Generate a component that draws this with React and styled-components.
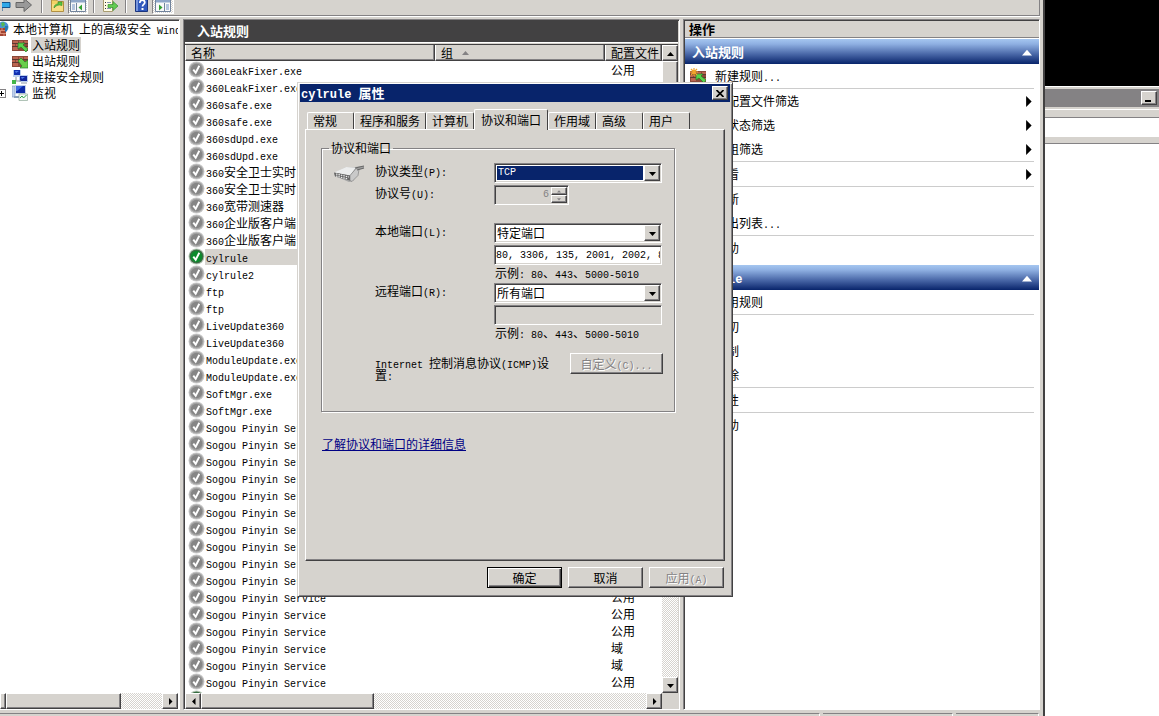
import React, { useState } from 'react'
import styled, { createGlobalStyle, css } from 'styled-components'

const face = '#d6d3ce'
const shade = '#848284'
const dark = '#424142'
const navy = '#08246b'

// // // // // // // // // // // Shared edges // // // // // // // // // // //
const raised = css`
    border: 1px solid;
    border-color: #fff ${dark} ${dark} #fff;
    box-shadow: inset -1px -1px ${shade};
    background: ${face};
`
const sunken = css`
    border: 1px solid;
    border-color: ${shade} #fff #fff ${shade};
    box-shadow: inset 1px 1px ${dark}, inset -1px -1px ${face};
    padding: 1px;
`
const checker = css`
    background: repeating-conic-gradient(#fff 0 25%, ${face} 0 50%) 0 0 / 2px 2px;
`

const GlobalStyle = createGlobalStyle`
    * { box-sizing: border-box; }
    body {
        margin: 0;
        overflow: hidden;
        background: #fff;
    }
    body, button, input, select {
        font-family: "Noto Sans CJK SC", sans-serif;
        font-size: 12px;
        line-height: 16px;
        color: #000;
    }
    button { padding: 0; }
    ul { list-style: none; margin: 0; padding: 0; }
`

// // // // // // // // // // // Text // // // // // // // // // // //
const Latin = styled.span`
    font-family: "Liberation Mono", monospace;
    font-size: ${p => (p.$bold ? 12 : 10)}px;
    line-height: 0;
    white-space: pre;
`
// Latin runs take half the width of a Chinese character
const Text = ({ value, bold }) =>
    value.split(/([\x20-\x7e]+)/).filter(Boolean).map((part, i) =>
        /^[\x20-\x7e]/.test(part) ? <Latin key={i} $bold={bold}>{part}</Latin> : part
    )

// // // // // // // // // // // Icons // // // // // // // // // // //
const Svg = styled.svg`
    flex: none;
    display: block;
`
const Triangle = ({ dir, color = '#000', size = 7 }) => {
    const d = {
        up: 'M0 6h7L3.5 2z',
        down: 'M0 2h7L3.5 6z',
        left: 'M5.5 0v7L2 3.5z',
        right: 'M2 0v7l3.5-3.5z'
    }[dir]
    return <Svg width={size} height={size} viewBox="0 0 7 7" aria-hidden="true"><path d={d} fill={color} /></Svg>
}
const CheckIcon = ({ on }) => (
    <Svg width="17" height="17" viewBox="0 0 17 17" aria-hidden="true">
        <circle cx="8.5" cy="8.5" r="8" fill={on ? '#b9c9b9' : '#c9c9c9'} />
        <circle cx="8.5" cy="8.5" r="7" fill={on ? '#3c6b44' : '#a3a3a3'} />
        <circle cx="8.5" cy="8.5" r="5.8" fill={on ? '#0c8a2c' : '#868686'} />
        <path d="M5.3 8.6l2.4 3.2 3.6-7" fill="none" stroke="#fff" strokeWidth="1.9" />
    </Svg>
)
const WallIcon = ({ arrow, star }) => (
    <Svg width="16" height="16" viewBox="0 0 16 16" aria-hidden="true">
        <path d="M0 3h16v11H0z" fill="#8c4a3a" />
        <path d="M1 4h5v2H1zM7 4h4v2H7zM12 4h4v2h-4zM0 7h3v2H0zM4 7h5v2H4zM1 10h5v3H1zM12 10h4v3h-4z" fill="#bb6651" />
        <path d="M0 6.5h16M0 9.5h16" stroke="#5e3931" strokeWidth="1" />
        {arrow === 'in'
            ? <path d="M6 6h7l-2 2 5 4-2 3-5-5-3 2z" fill="#59d24b" stroke="#267d27" strokeWidth=".7" />
            : <path d="M6 8l3-3 4 4 3-2v8H8l2-2z" fill="#69cf4b" stroke="#267d27" strokeWidth=".7" />}
        {star && <path d="M4 0v8M0 4h8M1 1l6 6M7 1L1 7" stroke="#f2a52c" strokeWidth="1.2" />}
    </Svg>
)
const LinkedIcon = () => (
    <Svg width="16" height="16" viewBox="0 0 16 16" aria-hidden="true">
        <path d="M1 1h8v7H1z" fill="#bcd0ee" /><path d="M2 1h6v5H2z" fill="#1230b0" />
        <path d="M7 6h9v7H7z" fill="#bcd0ee" /><path d="M8 7h7v5H8z" fill="#10249a" />
        <path d="M4 8v4h5" fill="none" stroke="#86949a" />
        <path d="M0 11h4v4H0z" fill="#43b649" /><path d="M9 14h6" stroke="#8898a8" />
        <path d="M3 2h4L4 4zM9 8h4l-3 2z" fill="#4f7bea" />
    </Svg>
)
const MonitorIcon = () => (
    <Svg width="16" height="16" viewBox="0 0 16 16" aria-hidden="true">
        <path d="M0 1h3v11H0z" fill="#bfd2ee" stroke="#7f91b8" strokeWidth=".6" />
        <path d="M3 0h11v9H3z" fill="#c3d2ea" /><path d="M4 1h9v7H4z" fill="#0d2aa8" /><path d="M4 1h7L5 6H4z" fill="#3e69de" />
        <path d="M2 11h6v2H2z" fill="#8aa0ba" />
        <path d="M7 9h8.5v6.5H7z" fill="#f4faf6" stroke="#8fa99a" strokeWidth=".7" />
        <path d="M8 13l2-2 1.5 2 3-3" fill="none" stroke="#2da34c" />
    </Svg>
)
const GlobeIcon = () => (
    <Svg width="9" height="16" viewBox="7 0 9 16" aria-hidden="true">
        <circle cx="10" cy="6" r="5.5" fill="#4a92d6" />
        <path d="M8 2l3-1 1 3-3 2zM11 6l4-1-1 4-3 1z" fill="#55b94f" />
        <path d="M4 7h9v8H4z" fill="#a24432" /><path d="M4 9.5h9M4 12.5h9M9 7v2.5M7.5 10v2.5M11 12.5V15" stroke="#e59a83" strokeWidth=".8" />
        <path d="M12 5h3l-1 5-2 1z" fill="#2675bb" />
    </Svg>
)
const BackIcon = () => (
    <Svg width="9" height="15" viewBox="0 0 9 15" aria-hidden="true">
        <path d="M-1 2.500h9v5H0V11l-4-6" fill="#31a9e8" stroke="#17558c" />
    </Svg>
)
const ForwardIcon = () => (
    <Svg width="18" height="15" viewBox="0 0 18 15" aria-hidden="true">
        <path d="M1 2.500h8v-4l7.500 6.500L9 11.500v-4H1z" fill="#999" stroke="#666" />
    </Svg>
)
const FolderIcon = () => (
    <Svg width="16" height="15" viewBox="0 0 16 15" aria-hidden="true">
        <path d="M1.500 0v11.500h12V1.500H8L6.500 0z" fill="#f3d264" stroke="#b29042" />
        <path d="M2 4h11v7H2z" fill="#f8dd82" />
        <path d="M4 8c0-3 2-4 4-4V2l4 0v3.500L9.500 5C7 5 6 6 4 8z" fill="#5bc63f" stroke="#338a28" strokeWidth=".6" />
    </Svg>
)
const PaneIcon = ({ dir }) => (
    <Svg width="16" height="14" viewBox="0 0 16 14" aria-hidden="true">
        <path d="M.5-3.500h15v15H.5z" fill="#f8f8f8" stroke="#71839c" />
        <path d="M1 0h14v2.500H1z" fill="#8fa6c8" />
        <path d={dir === 'left' ? 'M6.500 3v8' : 'M9.500 3v8'} stroke="#71839c" />
        <path d={dir === 'left' ? 'M2 5h3M2 7h3M2 9h3' : 'M11 5h3M11 7h3M11 9h3'} stroke="#7090c4" />
        <path d={dir === 'left' ? 'M12 4.500v6L8.500 7.500z' : 'M4 4.500v6l3.500-3z'} fill="#35a135" />
    </Svg>
)
const ExportIcon = () => (
    <Svg width="17" height="15" viewBox="0 0 17 15" aria-hidden="true">
        <path d="M1.500-2h9v13.500h-9z" fill="#fffce6" stroke="#a99c70" />
        <path d="M3 2.500h1M3 5.500h1M3 8.500h1" stroke="#333" /><path d="M5 2.500h4M5 8.500h4" stroke="#8597b5" />
        <path d="M6 4.500h5v-3l5 4.500-5 4.500v-3H6z" fill="#63cc52" stroke="#368f31" strokeWidth=".7" />
    </Svg>
)
const HelpIcon = () => (
    <Svg width="14" height="15" viewBox="0 0 14 15" aria-hidden="true">
        <path d="M.5-1h12v12.500H.5z" fill="#3159bd" stroke="#1b357e" />
        <path d="M1 0h2v11H1z" fill="#7896dc" />
        <path d="M4.800 3c0-4 5-3.500 5-.5 0 2-2.300 1.800-2.300 4" fill="none" stroke="#fff" strokeWidth="1.700" /><path d="M6.500 8h2v2h-2z" fill="#fff" />
    </Svg>
)
const PortIcon = () => (
    <Svg width="34" height="18" viewBox="0 0 34 18" aria-hidden="true">
        <path d="M1 8L13 2l9 0 9-1v2l-6 2-1 5-4 6-4 1L2 11z" fill="#a5a5a5" />
        <path d="M1 7.500L13 2l10 .5-6 8z" fill="#eceded" />
        <path d="M1 7.500l16 3v5L2 11.500z" fill="#666" />
        <path d="M3 9l13 3M3 11l12 3" stroke="#f2f2f2" strokeWidth="1.200" strokeDasharray="1.500 1" />
        <path d="M17 10.500l6-7 3 1-1 6-6 6-2-1z" fill="#c9c9c9" stroke="#777" strokeWidth=".6" />
        <path d="M22 3l9-2M24 5l7-2" stroke="#696969" strokeWidth="1.200" />
    </Svg>
)
const CloseIcon = () => (
    <Svg width="8" height="7" viewBox="0 0 8 7" aria-hidden="true"><path d="M.5 0l7 7M7.500 0l-7 7" stroke="#000" strokeWidth="1.700" /></Svg>
)

// // // // // // // // // // // Layout // // // // // // // // // // //
const Desktop = styled.div`
    display: flex;
    height: 100vh;
    overflow: hidden;
    position: relative;
    background: #000;
`
const Console = styled.div`
    flex: 1;
    min-width: 0;
    display: flex;
    flex-direction: column;
    background: ${face};
    border-right: 2px solid ${dark};
`
const Toolbar = styled.div`
    display: flex;
    height: 16px;
    flex: none;
    overflow: hidden;
    margin-right: 3px;
    border-bottom: 1px solid ${shade};
    border-right: 1px solid ${shade};
    box-shadow: 0 1px #fff;
`
const ToolButton = styled.button`
    display: flex;
    justify-content: center;
    flex: none;
    width: ${p => p.$width || 24}px;
    height: 14px;
    border: 0;
    background: none;
    ${p => p.$pressed && css`
        ${checker}
        border-right: 1px solid #fff;
        border-bottom: 1px solid #fff;
        border-left: 1px solid ${shade};
    `}
`
const ToolSplit = styled.span`
    flex: none;
    width: 2px;
    height: 13px;
    margin: 0 5px;
    border-left: 1px solid ${shade};
    border-right: 1px solid #fff;
`
const Panes = styled.div`
    flex: 1;
    min-height: 0;
    display: flex;
    gap: 3px;
    padding: 3px 3px 0 0;
`
const Pane = styled.section`
    display: flex;
    flex-direction: column;
    min-width: 0;
    background: ${p => p.$back || '#fff'};
    border: solid;
    border-width: 1px 1px 1px ${p => (p.$first ? 0 : 1)}px;
    border-color: ${shade} #fff #fff ${shade};
    box-shadow: inset ${p => (p.$first ? 0 : 1)}px 1px ${dark};
    padding: 1px ${p => (p.$flush ? 0 : 1)}px 0 ${p => (p.$first ? 0 : 1)}px;
    flex: ${p => p.$flex || 'none'};
    width: ${p => p.$width || 'auto'};
`
const StatusBar = styled.div`
    display: flex;
    flex: none;
    gap: 3px;
    height: 6px;
    padding: 3px 4px 0 0;
`
const StatusCell = styled.span`
    flex: ${p => p.$flex || 'none'};
    width: ${p => p.$width || 'auto'};
    border-top: 1px solid ${shade};
    border-right: 1px solid #fff;
`

// // // // // // // // // // // Tree // // // // // // // // // // //
const Tree = styled.ul`
    flex: 1;
    overflow: hidden;
`
const TreeRow = styled.li`
    display: flex;
    align-items: center;
    height: 16px;
    white-space: nowrap;
    gap: ${p => (p.$root ? 4 : 3)}px;
    padding-left: ${p => (p.$root || p.$expander ? 0 : 12)}px;
`
const TreeLabel = styled.span`
    padding: 0 1px;
    background: ${p => (p.$active ? face : 'transparent')};
`
const Expander = styled.button`
    width: 6px;
    height: 9px;
    margin-right: 3px;
    border: 1px solid ${shade};
    border-left: 0;
    background: linear-gradient(#000, #000) 0 3px / 4px 1px no-repeat, linear-gradient(#000, #000) 1px 1px / 1px 5px no-repeat, #fff;
`

// // // // // // // // // // // Scroll bars // // // // // // // // // // //
const Scroll = styled.div`
    display: flex;
    flex: none;
    flex-direction: ${p => (p.$vertical ? 'column' : 'row')};
    ${p => (p.$vertical ? 'width' : 'height')}: 16px;
    ${checker}
`
const ScrollButton = styled.button`
    ${raised}
    display: flex;
    align-items: center;
    justify-content: center;
    flex: none;
    width: ${p => p.$width || 16}px;
    height: 16px;
`
const Thumb = styled.span`
    ${raised}
    flex: none;
    flex-basis: ${p => p.$size};
`
const Grow = styled.span`
    flex: 1;
`
const Corner = styled.span`
    width: 16px;
    background: ${face};
`

// // // // // // // // // // // Rule list // // // // // // // // // // //
const ListTitle = styled.h2`
    margin: 0 0 1px;
    flex: none;
    height: 22px;
    padding: 0 12px;
    background: ${dark};
    color: #fff;
    font-size: 13px;
    line-height: 20px;
    border-bottom: 1px solid #fff;
`
const ListBox = styled.div`
    flex: 1;
    min-height: 0;
    display: flex;
    flex-direction: column;
    background: #fff;
    border-top: 1px solid ${dark};
`
const ListMain = styled.div`
    flex: 1;
    min-height: 0;
    display: flex;
`
const TableWrap = styled.div`
    flex: 1;
    overflow: hidden;
`
const Table = styled.table`
    width: 100%;
    table-layout: fixed;
    border-collapse: separate;
    border-spacing: 0;
`
const Th = styled.th`
    ${raised}
    border-top: 0;
    width: ${p => p.$width || 'auto'};
    height: 16px;
    padding: 0 5px;
    font-weight: normal;
    text-align: left;
    white-space: nowrap;
    overflow: hidden;
`
const HeadInner = styled.span`
    display: flex;
    align-items: center;
    gap: 9px;
    line-height: 15px;
`
const Td = styled.td`
    height: 17px;
    padding: 0 0 0 ${p => p.$pad || 0}px;
    line-height: 16px;
    white-space: nowrap;
    overflow: hidden;
`
const RuleName = styled.span`
    display: flex;
    align-items: center;
    height: 17px;
`
const RuleLabel = styled.span`
    flex: 1;
    padding-left: 1px;
    background: ${p => (p.$active ? face : 'transparent')};
`

// // // // // // // // // // // Actions // // // // // // // // // // //
const ActionsTitle = styled.h2`
    margin: 0 0 1px;
    padding: 0 4px;
    height: 17px;
    font-size: 13px;
    line-height: 16px;
    background: ${face};
    border-bottom: 1px solid ${shade};
`
const GroupHead = styled.button`
    display: flex;
    align-items: center;
    justify-content: space-between;
    width: 100%;
    height: 25px;
    padding: 0 7px;
    border: 0;
    background: linear-gradient(#a5c6f0, #8fb0e2 20%, #4a68a8 60%, ${navy});
    color: #fff;
    font-size: 13px;
    font-weight: bold;
`
const ActionList = styled.ul`
    padding: 0 5px;
    margin-bottom: 5px;
`
const ActionItem = styled.li`
    border-bottom: ${p => (p.$line ? '1px solid #ccc' : '0')};
`
const ActionButton = styled.button`
    display: flex;
    align-items: center;
    width: 100%;
    height: 24px;
    border: 0;
    background: none;
    text-align: left;
`
const ActionIcon = styled.span`
    width: 25px;
`
const ActionText = styled.span`
    flex: 1;
`

// // // // // // // // // // // Window behind // // // // // // // // // // //
const Behind = styled.div`
    flex: none;
    width: 114px;
    padding-top: 86px;
    display: flex;
    flex-direction: column;
`
const BehindTitle = styled.div`
    display: flex;
    align-items: center;
    justify-content: flex-end;
    height: 24px;
    padding-right: 2px;
    background: ${shade};
    border-top: 1px solid #fff;
    border-bottom: 1px solid #fff;
    box-shadow: inset 0 2px ${face}, inset 0 -2px ${face};
`
const MinButton = styled.button`
    ${raised}
    width: 16px;
    height: 14px;
    display: flex;
    align-items: flex-end;
    padding: 0 0 2px 3px;
`
const MinBar = styled.span`
    width: 6px;
    height: 2px;
    background: #000;
`
const BehindBar = styled.div`
    height: ${p => p.$height}px;
    background: ${p => (p.$white ? '#fff' : face)};
    border-bottom: 1px solid ${p => (p.$white ? '#fff' : shade)};
`
const BehindBody = styled.div`
    flex: 1;
    background: #fff;
`

// // // // // // // // // // // Dialog // // // // // // // // // // //
const Dialog = styled.div`
    position: absolute;
    left: 297px;
    top: 82px;
    width: 436px;
    padding: 1px 2px 8px;
    background: ${face};
    border: 1px solid;
    border-color: ${face} ${dark} ${dark} ${face};
    box-shadow: inset 1px 1px #fff, inset -1px -1px ${shade};
`
const TitleBar = styled.div`
    display: flex;
    align-items: center;
    justify-content: space-between;
    height: 18px;
    padding: 0 2px 0 1px;
    background: ${navy};
    color: #fff;
    font-size: 13px;
    font-weight: bold;
`
const CloseButton = styled.button`
    ${raised}
    display: flex;
    align-items: center;
    justify-content: center;
    width: 16px;
    height: 14px;
`
const TabRow = styled.div`
    display: flex;
    align-items: flex-end;
    height: 21px;
    margin: 6px 6px 0 7px;
`
const Tab = styled.button`
    min-width: 47px;
    height: ${p => (p.$active ? 21 : 17)}px;
    padding: 0 ${p => (p.$active ? 6 : 5)}px;
    margin-bottom: ${p => (p.$active ? -1 : 0)}px;
    border: 1px solid;
    border-color: #fff ${dark} ${face} #fff;
    border-bottom: 0;
    border-radius: 2px 2px 0 0;
    background: ${face};
    text-align: left;
    z-index: ${p => (p.$active ? 1 : 0)};
`
const TabPanel = styled.div`
    min-height: 432px;
    margin: 0 5px;
    padding: 11px 49px 0 15px;
    border: 1px solid;
    border-color: #fff ${dark} ${dark} #fff;
    box-shadow: inset -1px -1px ${shade};
`
const Group = styled.fieldset`
    min-width: 0;
    height: 271px;
    margin: 0 0 24px;
    padding: 8px 11px 0;
    border: 1px solid ${shade};
    box-shadow: 1px 1px #fff, inset 1px 1px #fff;
    legend {
        padding: 0 2px;
        margin-left: -4px;
        line-height: 14px;
    }
`
const Form = styled.div`
    display: grid;
    grid-template-columns: 42px 119px 168px;
    row-gap: 2px;
    align-items: start;
`
const IconCell = styled.span`
    grid-row: 1 / 3;
    padding-top: 2px;
`
const FieldLabel = styled.label`
    grid-column: 2;
`
const Field = styled.div`
    grid-column: 3;
    margin-bottom: ${p => p.$after || 0}px;
`
const Hint = styled.div`
    padding-left: 1px;
`
const SelectBox = styled.div`
    ${sunken}
    display: flex;
    height: 20px;
    background: #fff;
`
const Select = styled.select`
    flex: 1;
    min-width: 0;
    appearance: none;
    border: ${p => (p.$active ? '1px solid #fff' : '0')};
    outline: 0;
    border-radius: 0;
    padding: 0 1px;
    line-height: 14px;
    color: ${p => (p.$active ? '#fff' : '#000')};
    background: ${p => (p.$active ? navy : '#fff')};
    ${p => p.$active && css`
        font-family: "Liberation Mono", monospace;
        font-size: 10px;
    `}
`
const DropArrow = styled.span`
    ${raised}
    display: flex;
    align-items: center;
    justify-content: center;
    width: 16px;
    pointer-events: none;
`
const Input = styled.input`
    ${sunken}
    display: block;
    width: 100%;
    height: 20px;
    padding: 0 1px;
    border-radius: 0;
    outline: 0;
    background: ${p => (p.disabled ? face : '#fff')};
    color: ${p => (p.disabled ? shade : '#000')};
    font-family: "Liberation Mono", monospace;
    font-size: 10px;
`
const SpinBox = styled.div`
    ${sunken}
    display: flex;
    width: 75px;
    height: 20px;
    input {
        flex: 1;
        min-width: 0;
        border: 0;
        padding: 0 2px;
        background: none;
        text-align: right;
        color: ${shade};
        font-family: "Liberation Mono", monospace;
        font-size: 10px;
    }
`
const SpinButtons = styled.span`
    display: flex;
    flex-direction: column;
    width: 16px;
    button {
        ${raised}
        flex: 1;
        min-height: 0;
        display: flex;
        align-items: center;
        justify-content: center;
    }
`
const IcmpRow = styled.div`
    display: flex;
    justify-content: space-between;
    margin: 12px 0 0 42px;
`
const IcmpLabel = styled.span`
    width: 180px;
    padding-top: 4px;
    line-height: 12px;
`
const Button = styled.button`
    ${raised}
    width: ${p => p.$width || 75}px;
    height: 21px;
    line-height: 17px;
    ${p => p.$main && css`
        border-color: #000;
        box-shadow: inset 1px 1px #fff, inset -1px -1px ${dark}, inset -2px -2px ${shade};
    `}
    ${p => p.disabled && css`
        color: ${shade};
        text-shadow: 1px 1px #fff;
    `}
`
const HelpLink = styled.a`
    margin-left: 1px;
    color: #000084;
    text-decoration: underline;
`
const DialogButtons = styled.div`
    display: flex;
    justify-content: flex-end;
    gap: 6px;
    padding: 6px 6px 0;
`

// // // // // // // // // // // Data // // // // // // // // // // //
const names = [
    '360LeakFixer.exe', '360LeakFixer.exe', '360safe.exe', '360safe.exe', '360sdUpd.exe', '360sdUpd.exe',
    '360安全卫士实时', '360安全卫士实时', '360宽带测速器', '360企业版客户端', '360企业版客户端',
    'cylrule', 'cylrule2', 'ftp', 'ftp', 'LiveUpdate360', 'LiveUpdate360',
    'ModuleUpdate.exe', 'ModuleUpdate.exe', 'SoftMgr.exe', 'SoftMgr.exe',
    ...Array(17).fill('Sogou Pinyin Service')
]
const rules = names.map((name, i) => ({
    name,
    profile: i === 34 || i === 35 ? '域' : '公用',
    enabled: name === 'cylrule' || i === names.length - 1
}))

const listActions = [
    { text: '新建规则...', icon: true, line: true },
    { text: '按配置文件筛选', more: true },
    { text: '按状态筛选', more: true },
    { text: '按组筛选', more: true, line: true },
    { text: '查看', more: true, line: true },
    { text: '刷新' },
    { text: '导出列表...', line: true },
    { text: '帮助' }
]
const ruleActions = [
    { text: '禁用规则', line: true },
    { text: '剪切' },
    { text: '复制' },
    { text: '删除', line: true },
    { text: '属性', line: true },
    { text: '帮助' }
]
const tabs = ['常规', '程序和服务', '计算机', '协议和端口', '作用域', '高级', '用户']

// // // // // // // // // // // Parts // // // // // // // // // // //
const Actions = ({ title, items }) => (
    <>
        <GroupHead type="button">
            <span><Text value={title} bold /></span>
            <Triangle dir="up" color="#fff" size={10} />
        </GroupHead>
        <ActionList>
            {items.map(item => (
                <ActionItem key={item.text} $line={item.line}>
                    <ActionButton type="button">
                        <ActionIcon>{item.icon && <WallIcon arrow="in" star />}</ActionIcon>
                        <ActionText><Text value={item.text} /></ActionText>
                        {item.more && <Triangle dir="right" size={11} />}
                    </ActionButton>
                </ActionItem>
            ))}
        </ActionList>
    </>
)

const DropDown = ({ id, value, active }) => (
    <SelectBox>
        <Select id={id} defaultValue={value} $active={active}>
            <option>{value}</option>
        </Select>
        <DropArrow><Triangle dir="down" /></DropArrow>
    </SelectBox>
)

const RuleDialog = () => {
    const [tab, setTab] = useState('协议和端口')
    const [ports, setPorts] = useState('80, 3306, 135, 2001, 2002, 8080')

    return (
        <Dialog role="dialog" aria-labelledby="dialogTitle">
            <TitleBar>
                <span id="dialogTitle"><Text value="cylrule 属性" bold /></span>
                <CloseButton type="button" aria-label="关闭"><CloseIcon /></CloseButton>
            </TitleBar>
            <TabRow role="tablist">
                {tabs.map(name => (
                    <Tab
                        key={name}
                        type="button"
                        role="tab"
                        aria-selected={tab === name}
                        $active={tab === name}
                        onClick={() => setTab(name)}
                    >
                        {name}
                    </Tab>
                ))}
            </TabRow>
            <TabPanel role="tabpanel">
                <Group>
                    <legend>协议和端口</legend>
                    <Form>
                        <IconCell><PortIcon /></IconCell>
                        <FieldLabel htmlFor="protocol"><Text value="协议类型(P):" /></FieldLabel>
                        <Field><DropDown id="protocol" value="TCP" active /></Field>
                        <FieldLabel htmlFor="protocolNumber"><Text value="协议号(U):" /></FieldLabel>
                        <Field $after={16}>
                            <SpinBox>
                                <input id="protocolNumber" defaultValue="6" disabled />
                                <SpinButtons>
                                    <button type="button" disabled aria-label="增加"><Triangle dir="up" color={shade} size={4} /></button>
                                    <button type="button" disabled aria-label="减少"><Triangle dir="down" color={shade} size={4} /></button>
                                </SpinButtons>
                            </SpinBox>
                        </Field>
                        <FieldLabel htmlFor="localPort"><Text value="本地端口(L):" /></FieldLabel>
                        <Field><DropDown id="localPort" value="特定端口" /></Field>
                        <Field>
                            <Input aria-label="本地端口" value={ports} onChange={e => setPorts(e.target.value)} />
                            <Hint><Text value="示例: 80、443、5000-5010" /></Hint>
                        </Field>
                        <FieldLabel htmlFor="remotePort"><Text value="远程端口(R):" /></FieldLabel>
                        <Field><DropDown id="remotePort" value="所有端口" /></Field>
                        <Field>
                            <Input aria-label="远程端口" disabled />
                            <Hint><Text value="示例: 80、443、5000-5010" /></Hint>
                        </Field>
                    </Form>
                    <IcmpRow>
                        <IcmpLabel><Text value="Internet 控制消息协议(ICMP)设置:" /></IcmpLabel>
                        <Button type="button" disabled $width={93}><Text value="自定义(C)..." /></Button>
                    </IcmpRow>
                </Group>
                <HelpLink href="#ports">了解协议和端口的详细信息</HelpLink>
            </TabPanel>
            <DialogButtons>
                <Button type="button" $main>确定</Button>
                <Button type="button">取消</Button>
                <Button type="button" disabled><Text value="应用(A)" /></Button>
            </DialogButtons>
        </Dialog>
    )
}

const App = () => (
    <Desktop>
        <GlobalStyle />
        <Console>
            <Toolbar>
                <ToolButton $width={12} aria-label="后退"><BackIcon /></ToolButton>
                <ToolButton aria-label="前进"><ForwardIcon /></ToolButton>
                <ToolSplit />
                <ToolButton $width={20} aria-label="打开"><FolderIcon /></ToolButton>
                <ToolButton $width={20} $pressed aria-label="显示树"><PaneIcon dir="left" /></ToolButton>
                <ToolSplit />
                <ToolButton $width={20} aria-label="导出"><ExportIcon /></ToolButton>
                <ToolSplit />
                <ToolButton $width={20} aria-label="帮助"><HelpIcon /></ToolButton>
                <ToolButton $width={22} $pressed aria-label="显示操作"><PaneIcon dir="right" /></ToolButton>
            </Toolbar>
            <Panes>
                <Pane $first $width="180px">
                    <Tree role="tree">
                        <TreeRow role="treeitem" $root>
                            <GlobeIcon />
                            <span><Text value="本地计算机 上的高级安全 Windows" /></span>
                        </TreeRow>
                        <TreeRow role="treeitem"><WallIcon arrow="in" /><TreeLabel $active>入站规则</TreeLabel></TreeRow>
                        <TreeRow role="treeitem"><WallIcon arrow="out" /><TreeLabel>出站规则</TreeLabel></TreeRow>
                        <TreeRow role="treeitem"><LinkedIcon /><TreeLabel>连接安全规则</TreeLabel></TreeRow>
                        <TreeRow role="treeitem" $expander>
                            <Expander type="button" aria-label="展开" />
                            <MonitorIcon />
                            <TreeLabel>监视</TreeLabel>
                        </TreeRow>
                    </Tree>
                    <Scroll>
                        <ScrollButton type="button" $width={6} aria-label="向左" />
                        <Thumb $size="115px" />
                        <Grow />
                        <ScrollButton type="button" aria-label="向右"><Triangle dir="right" /></ScrollButton>
                    </Scroll>
                </Pane>
                <Pane $flex="1" $back={face}>
                    <ListTitle>入站规则</ListTitle>
                    <ListBox>
                        <ListMain>
                            <TableWrap>
                                <Table>
                                    <thead>
                                        <tr>
                                            <Th $width="250px"><HeadInner>名称</HeadInner></Th>
                                            <Th><HeadInner>组<Triangle dir="up" color={shade} /></HeadInner></Th>
                                            <Th $width="57px"><HeadInner>配置文件</HeadInner></Th>
                                        </tr>
                                    </thead>
                                    <tbody>
                                        {rules.map((rule, i) => (
                                            <tr key={i}>
                                                <Td $pad={3}>
                                                    <RuleName>
                                                        <CheckIcon on={rule.enabled} />
                                                        <RuleLabel $active={rule.name === 'cylrule'}><Text value={rule.name} /></RuleLabel>
                                                    </RuleName>
                                                </Td>
                                                <Td />
                                                <Td $pad={6}>{rule.profile}</Td>
                                            </tr>
                                        ))}
                                    </tbody>
                                </Table>
                            </TableWrap>
                            <Scroll $vertical>
                                <ScrollButton type="button" aria-label="向上"><Triangle dir="up" /></ScrollButton>
                                <Thumb $size="50%" />
                                <Grow />
                                <ScrollButton type="button" aria-label="向下"><Triangle dir="down" /></ScrollButton>
                            </Scroll>
                        </ListMain>
                        <Scroll>
                            <ScrollButton type="button" aria-label="向左"><Triangle dir="left" /></ScrollButton>
                            <Thumb $size="173px" />
                            <Grow />
                            <ScrollButton type="button" aria-label="向右"><Triangle dir="right" /></ScrollButton>
                            <Corner />
                        </Scroll>
                    </ListBox>
                </Pane>
                <Pane $width="357px" $flush>
                    <ActionsTitle>操作</ActionsTitle>
                    <Actions title="入站规则" items={listActions} />
                    <Actions title="cylrule" items={ruleActions} />
                </Pane>
            </Panes>
            <StatusBar>
                <StatusCell $flex="1" />
                <StatusCell $width="130px" />
                <StatusCell $width="83px" />
            </StatusBar>
        </Console>
        <Behind>
            <BehindTitle>
                <MinButton type="button" aria-label="最小化"><MinBar /></MinButton>
            </BehindTitle>
            <BehindBar $height={8} />
            <BehindBar $height={19} $white />
            <BehindBar $height={7} />
            <BehindBody />
        </Behind>
        <RuleDialog />
    </Desktop>
)

export default App
